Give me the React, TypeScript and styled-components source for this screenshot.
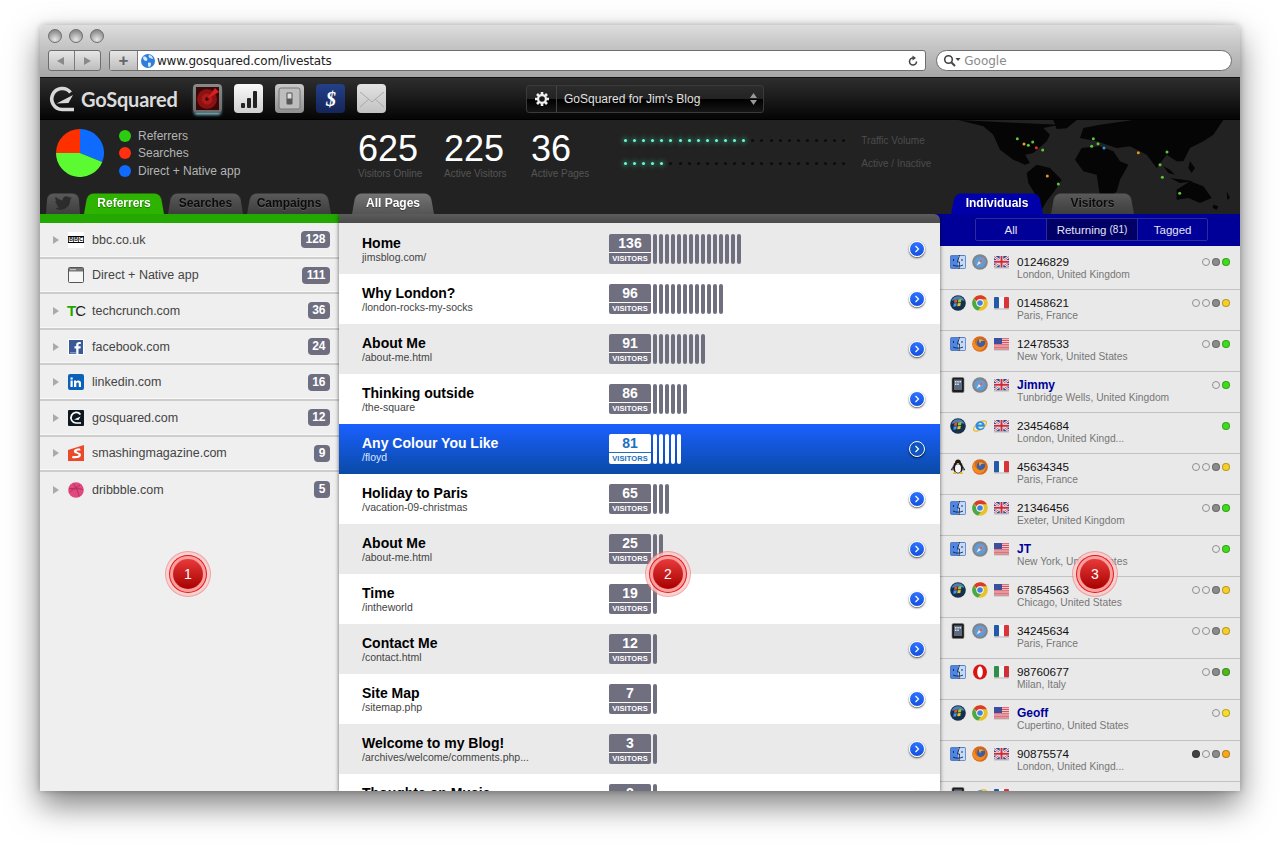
import React from 'react'
import styled, { createGlobalStyle } from 'styled-components'

const GlobalStyle = createGlobalStyle`
  html, body {
    margin: 0;
    padding: 0;
    background: #fff;
    overflow: hidden;
  }
  body {
    font-family: "Liberation Sans", Arial, sans-serif;
  }
`;

/* ---------- data ---------- */

const referrers = [
  { name: 'bbc.co.uk', count: 128, icon: 'bbc' },
  { name: 'Direct + Native app', count: 111, icon: 'direct', noArrow: true },
  { name: 'techcrunch.com', count: 36, icon: 'tc' },
  { name: 'facebook.com', count: 24, icon: 'fb' },
  { name: 'linkedin.com', count: 16, icon: 'in' },
  { name: 'gosquared.com', count: 12, icon: 'gs' },
  { name: 'smashingmagazine.com', count: 9, icon: 'sm' },
  { name: 'dribbble.com', count: 5, icon: 'dr' },
];

const pages = [
  { title: 'Home', path: 'jimsblog.com/', visitors: 136, bars: 15 },
  { title: 'Why London?', path: '/london-rocks-my-socks', visitors: 96, bars: 12 },
  { title: 'About Me', path: '/about-me.html', visitors: 91, bars: 9 },
  { title: 'Thinking outside', path: '/the-square', visitors: 86, bars: 6 },
  { title: 'Any Colour You Like', path: '/floyd', visitors: 81, bars: 5, selected: true },
  { title: 'Holiday to Paris', path: '/vacation-09-christmas', visitors: 65, bars: 3 },
  { title: 'About Me', path: '/about-me.html', visitors: 25, bars: 2 },
  { title: 'Time', path: '/intheworld', visitors: 19, bars: 1 },
  { title: 'Contact Me', path: '/contact.html', visitors: 12, bars: 1 },
  { title: 'Site Map', path: '/sitemap.php', visitors: 7, bars: 1 },
  { title: 'Welcome to my Blog!', path: '/archives/welcome/comments.php...', visitors: 3, bars: 1 },
  { title: 'Thoughts on Music', path: '', visitors: 2, bars: 1 },
];

const G = '#8b8b8b';
const O = 'empty';
const people = [
  { os: 'mac', br: 'safari', fl: 'uk', id: '01246829', place: 'London, United Kingdom', dots: [O, G, '#3fdc1c'] },
  { os: 'win', br: 'chrome', fl: 'fr', id: '01458621', place: 'Paris, France', dots: [O, O, G, '#f7cf2a'] },
  { os: 'mac', br: 'firefox', fl: 'us', id: '12478533', place: 'New York, United States', dots: [O, G, '#3fdc1c'] },
  { os: 'ipad', br: 'safari', fl: 'uk', id: 'Jimmy', named: true, place: 'Tunbridge Wells, United Kingdom', dots: [O, '#3fdc1c'] },
  { os: 'win', br: 'ie', fl: 'uk', id: '23454684', place: 'London, United Kingd...', dots: ['#3fdc1c'] },
  { os: 'tux', br: 'firefox', fl: 'fr', id: '45634345', place: 'Paris, France', dots: [O, O, G, '#f7cf2a'] },
  { os: 'mac', br: 'chrome', fl: 'uk', id: '21346456', place: 'Exeter, United Kingdom', dots: [O, G, '#3fdc1c'] },
  { os: 'mac', br: 'safari', fl: 'us', id: 'JT', named: true, place: 'New York, United States', dots: [O, '#3fdc1c'] },
  { os: 'win', br: 'chrome', fl: 'us', id: '67854563', place: 'Chicago, United States', dots: [O, O, G, '#f7cf2a'] },
  { os: 'ipad', br: 'safari', fl: 'fr', id: '34245634', place: 'Paris, France', dots: [O, O, G, '#f7cf2a'] },
  { os: 'mac', br: 'opera', fl: 'it', id: '98760677', place: 'Milan, Italy', dots: [O, G, '#4fb81f'] },
  { os: 'win', br: 'chrome', fl: 'us', id: 'Geoff', named: true, place: 'Cupertino, United States', dots: [O, '#f7dc2a'] },
  { os: 'mac', br: 'firefox', fl: 'uk', id: '90875574', place: 'London, United Kingd...', dots: ['#444', O, G, '#f7a81e'] },
  { os: 'ipad', br: 'ie', fl: 'fr', id: '', place: '', dots: [] },
];

const mapDots = [
  [202, 62, '#5fc63c'], [248, 72, '#5fc63c'], [235, 82, '#5fc63c'], [278, 96, '#5fc63c'],
  [430, 62, '#5fc63c'], [444, 77, '#5fc63c'], [425, 85, '#5fc63c'], [651, 102, '#5fc63c'],
  [630, 140, '#5fc63c'], [637, 178, '#5fc63c'], [325, 198, '#5fc63c'], [689, 226, '#5fc63c'],
  [222, 78, '#f0a020'], [565, 104, '#f0901c'], [292, 174, '#f0901c'], [259, 89, '#e8302c'], [462, 90, '#1e9cf0'],
];

/* ---------- small drawings ---------- */

const Finder = () => (
  <svg width="16" height="16" viewBox="0 0 16 16">
    <rect x="0.5" y="1.5" width="15" height="13" rx="1" fill="#4f86e4" stroke="#2a55a8" strokeWidth="0.6" />
    <path d="M8 2h7.2v12.200H8z" fill="#c4daf8" />
    <path d="M9.500 1 7.500 8h2l-.5 7" fill="none" stroke="#14233f" strokeWidth="0.9" />
    <path d="M3.500 5v2M12 5v2M3 11c2.500 1.500 7.500 1.500 10 0" stroke="#14233f" strokeWidth="0.9" fill="none" />
  </svg>
);

const WinOrb = () => (
  <svg width="16" height="16" viewBox="0 0 16 16">
    <circle cx="8" cy="8" r="7.800" fill="#14304f" />
    <path d="M1.500 6a6.800 6.800 0 0 1 13 0C10 4 6 4 1.500 6z" fill="#4f7eb0" />
    <path d="M4.500 5 7.500 4.500 7 7.500 4 7.800z" fill="#e8532a" />
    <path d="M8.300 4.400 11.500 4 11 7.200 7.800 7.500z" fill="#8cc83a" />
    <path d="M3.800 8.500 6.800 8.300 6.300 11.300 3.300 11.700z" fill="#3f9be8" />
    <path d="M7.700 8.200 10.800 8 10.300 11 7.200 11.300z" fill="#f2c12e" />
  </svg>
);

const IPad = () => (
  <svg width="16" height="16" viewBox="0 0 16 16">
    <rect x="2" y="0.500" width="12" height="15" rx="1.500" fill="#1c1c1c" stroke="#777" strokeWidth="0.6" />
    <rect x="4" y="2.500" width="8" height="10.500" fill="#5d6b80" />
    <path d="M5 4h1.500v1.500H5zM7.300 4h1.500v1.500H7.300zM9.500 4H11v1.500H9.500zM5 6.500h1.500V8H5zM7.300 6.500h1.500V8H7.300z" fill="#dfe6ef" />
  </svg>
);

const Tux = () => (
  <svg width="16" height="16" viewBox="0 0 16 16">
    <ellipse cx="8" cy="8.500" rx="5" ry="6" fill="#1a1a1a" />
    <path d="M8 0.500c2 0 3 1.500 3 3.500H5c0-2 1-3.500 3-3.500z" fill="#1a1a1a" />
    <ellipse cx="8" cy="9.500" rx="3" ry="4.200" fill="#f4f4f4" />
    <path d="M6.500 4h3L8 5.600z" fill="#f0b41e" />
    <path d="M3 15c0-1.500 1-2 2.500-2l1 2zM13 15c0-1.500-1-2-2.500-2l-1 2z" fill="#f0b41e" />
    <path d="M3 7 .8 11l1.700.4zM13 7l2.200 4-1.700.4z" fill="#1a1a1a" />
  </svg>
);

const Safari = () => (
  <svg width="16" height="16" viewBox="0 0 16 16">
    <circle cx="8" cy="8" r="7.800" fill="#80858c" />
    <circle cx="8" cy="8" r="5.600" fill="#5f9cd8" />
    <path d="M11.500 4.500 9 9 4.500 11.500 7 7z" fill="#e8eef5" />
    <path d="M11.500 4.500 9 9 7 7z" fill="#d9534a" />
  </svg>
);

const Chrome = () => (
  <svg width="16" height="16" viewBox="0 0 16 16">
    <circle cx="8" cy="8" r="7.800" fill="#e8c22c" />
    <path d="M8 .2a7.800 7.800 0 0 1 6.800 4H8a3.800 3.800 0 0 0-3.400 2.100L1.900 3.200A7.800 7.800 0 0 1 8 .2z" fill="#dc3a2e" />
    <path d="M1.900 3.200 5.300 9.600a3.800 3.800 0 0 0 3.700 2.100L6 15.600A7.800 7.800 0 0 1 1.900 3.200z" fill="#4aa84a" />
    <circle cx="8" cy="8" r="3.700" fill="#fff" />
    <circle cx="8" cy="8" r="2.800" fill="#3f7fe0" />
  </svg>
);

const Firefox = () => (
  <svg width="16" height="16" viewBox="0 0 16 16">
    <circle cx="8" cy="8" r="7.800" fill="#d9681a" />
    <circle cx="9" cy="7" r="4.200" fill="#3a5fa8" />
    <path d="M3 3c-.5 3 0 5 2 7 2 1.500 4.500 1.500 6.500 0 1.200-1 2-2.500 2-4 .8 3-.5 7-5 8.500C4 15 .7 11.500.7 8c0-2 1-3.700 2.300-5z" fill="#f28a1e" />
    <path d="M7 3.500c2-.8 4-.2 5.500 1.500-1.500-.5-2.500-.3-3.500.2-.5.8-.2 1.500-.8 2-.7-.5-1.500-2-1.200-3.700z" fill="#f6a82c" />
  </svg>
);

const IE = () => (
  <svg width="16" height="16" viewBox="0 0 16 16">
    <ellipse cx="8" cy="8" rx="7.500" ry="3.500" transform="rotate(-35 8 8)" fill="none" stroke="#e8b82a" strokeWidth="1.200" />
    <path d="M3.500 8a4.700 4.700 0 1 1 9.300.8H6.200c.2 2 3.400 2.700 5.500.8h1c-1.300 3.600-9.200 3.600-9.200-1.600zm2.800-1.600h3.900c-.3-2-3.500-2-3.900 0z" fill="#2d8fe0" />
  </svg>
);

const Opera = () => (
  <svg width="16" height="16" viewBox="0 0 16 16">
    <ellipse cx="8" cy="8" rx="7" ry="7.600" fill="#d81414" />
    <ellipse cx="8" cy="8" rx="2.800" ry="5.800" fill="#fff" />
  </svg>
);

const UK = () => (
  <svg width="16" height="14" viewBox="0 0 16 14">
    <rect y="1" width="15" height="11.500" rx="1" fill="#2b4a96" />
    <path d="M0 1.500 15 12M15 1.500 0 12" stroke="#f2f2f2" strokeWidth="2.400" />
    <path d="M0 1.500 15 12M15 1.500 0 12" stroke="#cf3a46" strokeWidth="0.800" />
    <path d="M7.500 1v11.500M0 6.750h15" stroke="#f2f2f2" strokeWidth="3.600" />
    <path d="M7.500 1v11.500M0 6.750h15" stroke="#cf2a38" strokeWidth="2" />
    <rect y="12.500" width="15" height="1" fill="#bbb" />
  </svg>
);

const US = () => (
  <svg width="16" height="14" viewBox="0 0 16 14">
    <rect y="1" width="15" height="11.500" rx="1" fill="#f4f4f4" />
    <path d="M0 1.800h15M0 3.600h15M0 5.400h15M0 7.200h15M0 9h15M0 10.800h15M0 12.200h15" stroke="#cf2a38" strokeWidth="0.900" />
    <rect y="1" width="8" height="6" fill="#3d4f9c" />
    <rect y="12.500" width="15" height="1" fill="#bbb" />
  </svg>
);

const FR = () => (
  <svg width="16" height="14" viewBox="0 0 16 14">
    <rect y="1" width="5" height="11.500" rx="1" fill="#2458a8" />
    <rect x="5" y="1" width="5" height="11.500" fill="#f4f4f4" />
    <rect x="10" y="1" width="5" height="11.500" rx="1" fill="#d8353a" />
    <rect y="12.500" width="15" height="1" fill="#bbb" />
  </svg>
);

const IT = () => (
  <svg width="16" height="14" viewBox="0 0 16 14">
    <rect y="1" width="5" height="11.500" rx="1" fill="#2f8f4a" />
    <rect x="5" y="1" width="5" height="11.500" fill="#f4f4f4" />
    <rect x="10" y="1" width="5" height="11.500" rx="1" fill="#cf3038" />
    <rect y="12.500" width="15" height="1" fill="#bbb" />
  </svg>
);

const osIcons: Record<string, React.ReactNode> = { mac: <Finder />, win: <WinOrb />, ipad: <IPad />, tux: <Tux /> };
const browserIcons: Record<string, React.ReactNode> = { safari: <Safari />, chrome: <Chrome />, firefox: <Firefox />, ie: <IE />, opera: <Opera /> };
const flagIcons: Record<string, React.ReactNode> = { uk: <UK />, us: <US />, fr: <FR />, it: <IT /> };

const favicons: Record<string, React.ReactNode> = {
  bbc: (
    <svg width="16" height="16" viewBox="0 0 16 16">
      <rect width="16" height="16" fill="#fff" />
      <rect y="4" width="16" height="7" fill="#000" />
      <rect x="0.800" y="5" width="4.400" height="5" fill="#fff" />
      <rect x="5.800" y="5" width="4.400" height="5" fill="#fff" />
      <rect x="10.800" y="5" width="4.400" height="5" fill="#fff" />
      <g fontFamily="Liberation Sans, sans-serif" fontWeight="bold" fontSize="5" textAnchor="middle" fill="#000">
        <text x="3" y="9.400">B</text>
        <text x="8" y="9.400">B</text>
        <text x="13" y="9.400">C</text>
      </g>
    </svg>
  ),
  direct: (
    <svg width="16" height="16" viewBox="0 0 16 16">
      <rect x="0.500" y="0.500" width="15" height="15" rx="1" fill="#f6f6f6" stroke="#555" />
      <rect x="1" y="1" width="14" height="3.500" fill="#777" />
      <path d="M2 2.600h6" stroke="#ccc" />
    </svg>
  ),
  fb: (
    <svg width="16" height="16" viewBox="0 0 16 16">
      <rect x="0.500" y="0.500" width="15" height="15" fill="#3b5998" stroke="#fff" />
      <path d="M10.500 15V9.500h2l.3-2.200h-2.300V6c0-.7.300-1 1-1h1.300V3c-2.800-.4-4.600.4-4.600 2.700v1.600H6.500v2.200h1.700V15z" fill="#fff" />
      <rect x="2" y="13" width="6" height="1.500" fill="#7d93c0" />
    </svg>
  ),
  in: (
    <svg width="16" height="16" viewBox="0 0 16 16">
      <rect width="16" height="16" rx="2" fill="#0a62b8" />
      <path d="M2.500 6.500h2.200V13H2.500zM2.500 3.500h2.200v2H2.500zM6 6.500h2.100v1c1.200-1.700 4.900-1.600 4.900 1.500V13h-2.200V9.600c0-1.600-2.500-1.500-2.500 0V13H6z" fill="#fff" />
    </svg>
  ),
  gs: (
    <svg width="16" height="16" viewBox="0 0 16 16">
      <rect width="16" height="16" rx="1" fill="#10181f" />
      <path d="M12.500 4.500A5.300 5.300 0 1 0 8 13h5" fill="none" stroke="#fff" strokeWidth="1.700" />
      <path d="M6 9.500 12.500 6.500 10.500 10z" fill="#fff" />
    </svg>
  ),
  sm: (
    <svg width="16" height="16" viewBox="0 0 16 16">
      <path d="M0 5 16 0v16H0z" fill="#ea4a2a" />
      <path d="M12 3.500C8 3.200 5.500 4.500 6 6.800c.4 2 4.400 1.700 4.600 3.200.1 1-2 1.300-6 1l-.6 2c4.500.5 8.700.2 9-2.900.2-2.700-4.300-2.700-4.500-3.900-.1-.7 1.500-.9 4-.7z" fill="#fff" />
    </svg>
  ),
  dr: (
    <svg width="16" height="16" viewBox="0 0 16 16">
      <circle cx="8" cy="8" r="7.800" fill="#e0487e" />
      <path d="M5.200 1.500c2.500 3 5 8 6 13M1 6.500c4 .5 8.500-.500 11-3.500M1.300 10.500c3-4 8.500-4.500 13.400-3" fill="none" stroke="#a82a5a" strokeWidth="0.800" />
    </svg>
  ),
};

/* ---------- window + browser chrome ---------- */

const Page = styled.div`
  width: 1280px;
  height: 846px;
  padding: 25px 40px 0;
  box-sizing: border-box;
`;

const Window = styled.div`
  width: 1200px;
  height: 766px;
  display: flex;
  flex-direction: column;
  overflow: hidden;
  border-radius: 5px 5px 0 0;
  box-shadow: 0 14px 32px rgba(0, 0, 0, 0.5), 0 0 6px rgba(0, 0, 0, 0.25);
`;

const BrowserBar = styled.div`
  height: 53px;
  flex: none;
  box-sizing: border-box;
  padding: 4px 8px 0;
  background: linear-gradient(#dedede, #cbcbcb 30%, #a6a6a6);
  border-bottom: 1px solid #111;
`;

const Lights = styled.div`
  display: flex;
  gap: 7px;
`;

const Light = styled.span`
  width: 14px;
  height: 14px;
  border-radius: 50%;
  box-sizing: border-box;
  border: 1px solid #6f6f6f;
  background: radial-gradient(circle at 50% 80%, #e8e8e8, #8f8f8f 75%);
`;

const BrowserTools = styled.div`
  display: flex;
  align-items: center;
  margin-top: 7px;
  height: 21px;
`;

const NavPair = styled.div`
  display: flex;
  width: 53px;
  height: 21px;
  box-sizing: border-box;
  border: 1px solid #6d6d6d;
  border-radius: 3px;
  background: linear-gradient(#e6e6e6, #bdbdbd);
  margin-right: 8px;
`;

const NavCell = styled.span`
  flex: 1;
  display: flex;
  align-items: center;
  justify-content: center;
  & + & {
    border-left: 1px solid #7a7a7a;
  }
`;

const UrlField = styled.div`
  display: flex;
  align-items: center;
  width: 818px;
  height: 21px;
  box-sizing: border-box;
  border: 1px solid #6d6d6d;
  border-radius: 3px;
  background: #fff;
  margin-right: 10px;
  overflow: hidden;
`;

const PlusCell = styled.span`
  width: 27px;
  height: 100%;
  flex: none;
  display: flex;
  align-items: center;
  justify-content: center;
  background: linear-gradient(#e6e6e6, #bdbdbd);
  border-right: 1px solid #7a7a7a;
  color: #666;
  font-size: 17px;
  font-weight: bold;
  line-height: 1;
`;

const UrlText = styled.span`
  flex: 1;
  margin-left: 1px;
  font-family: "DejaVu Sans", sans-serif;
  font-size: 12px;
  letter-spacing: -0.18px;
  color: #222;
`;

const SearchField = styled.div`
  display: flex;
  align-items: center;
  width: 296px;
  height: 21px;
  box-sizing: border-box;
  padding-left: 6px;
  border: 1px solid #6d6d6d;
  border-radius: 11px;
  background: #fff;
  font-family: "DejaVu Sans", sans-serif;
  font-size: 12px;
  color: #8a8a8a;
  gap: 3px;
`;

/* ---------- dark app header ---------- */

const AppHeader = styled.div`
  height: 42px;
  flex: none;
  display: flex;
  align-items: center;
  box-sizing: border-box;
  padding-left: 9px;
  background: linear-gradient(#2e2e2e, #1c1c1c 45%, #050505);
  border-bottom: 1px solid #000;
`;

const LogoText = styled.span`
  margin-left: 6px;
  font-family: "Lato", sans-serif;
  font-weight: 700;
  font-size: 20px;
  letter-spacing: -0.2px;
  color: #dcdcdc;
  width: 112px;
`;

const AppIcons = styled.div`
  display: flex;
  gap: 12px;
  width: 333px;
`;

const AppIcon = styled.span<{ $bg: string; $active?: boolean }>`
  position: relative;
  width: 29px;
  height: 29px;
  display: flex;
  align-items: center;
  justify-content: center;
  border-radius: 4px;
  background: ${p => p.$bg};
  ${p => p.$active && 'box-shadow: 0 3px 3px -1px #6fb5c4;'}
`;

const SiteSelect = styled.div`
  display: flex;
  align-items: center;
  width: 238px;
  height: 28px;
  box-sizing: border-box;
  border: 1px solid #3a3a3a;
  border-radius: 3px;
  background: linear-gradient(#2c2c2c, #232323 48%, #000 52%, #161616);
  color: #e0e0e0;
  font-size: 12px;
`;

const GearCell = styled.span`
  width: 29px;
  height: 100%;
  display: flex;
  align-items: center;
  justify-content: center;
  border-right: 1px solid #444;
`;

const SiteName = styled.span`
  flex: 1;
  padding-left: 7px;
`;

const UpDown = styled.span`
  display: flex;
  flex-direction: column;
  gap: 2px;
  margin-right: 6px;
`;

/* ---------- stats panel ---------- */

const StatsPanel = styled.div`
  position: relative;
  height: 94px;
  flex: none;
  display: flex;
  flex-direction: column;
  background: #222;
`;

const WorldMap = styled.svg`
  position: absolute;
  top: 0;
  right: 0;
`;

const StatsTop = styled.div`
  height: 71px;
  flex: none;
  display: flex;
  position: relative;
`;

const PieSlot = styled.div`
  width: 79px;
  padding: 9px 0 0 16px;
  box-sizing: border-box;
`;

const Legend = styled.div`
  width: 239px;
  padding-top: 7px;
  box-sizing: border-box;
`;

const LegendRow = styled.div`
  display: flex;
  align-items: center;
  height: 17.5px;
  gap: 7px;
  font-size: 12px;
  color: #b4b4b4;
`;

const LegendDot = styled.span<{ $color: string }>`
  width: 12px;
  height: 12px;
  border-radius: 50%;
  background: ${p => p.$color};
`;

const Numbers = styled.div`
  display: flex;
  width: 266px;
  padding-top: 10px;
  box-sizing: border-box;
`;

const NumberBlock = styled.div<{ $width: number }>`
  width: ${p => p.$width}px;
`;

const BigNumber = styled.div`
  font-size: 36px;
  line-height: 38px;
  color: #fff;
`;

const SmallLabel = styled.div`
  font-size: 10px;
  color: #555;
  white-space: nowrap;
  line-height: 11px;
`;

const Meters = styled.div`
  padding-top: 16px;
  box-sizing: border-box;
  display: flex;
  flex-direction: column;
  gap: 14px;
`;

const MeterRow = styled.div`
  display: flex;
  align-items: center;
  height: 9px;
`;

const MeterDot = styled.span<{ $on: boolean }>`
  width: 3px;
  height: 3px;
  margin-right: 6.1px;
  border-radius: 50%;
  background: ${p => (p.$on ? '#6ff5e4' : '#0c0c0c')};
  box-shadow: ${p => (p.$on ? '0 0 4px 2px rgba(60, 220, 150, 0.28)' : 'none')};
`;

const MeterLabel = styled.span`
  margin-left: 10px;
  font-size: 10px;
  color: #4c4c4c;
`;

const TabBar = styled.div`
  height: 23px;
  flex: none;
  display: grid;
  grid-template-columns: 299px 601px 300px;
  position: relative;
`;

const TabGroup = styled.div<{ $pad: number; $gap: number }>`
  display: flex;
  padding-left: ${p => p.$pad}px;
  gap: ${p => p.$gap}px;
`;

const Tab = styled.div<{ $width: number; $bg: string; $active?: boolean }>`
  position: relative;
  width: ${p => p.$width}px;
  height: 23px;
  display: flex;
  align-items: center;
  justify-content: center;
  font-size: 12px;
  font-weight: bold;
  box-sizing: border-box;
  color: ${p => (p.$active ? '#fff' : '#0c0c0c')};
  text-shadow: ${p => (p.$active ? '0 1px 1px rgba(0,0,0,.4)' : '0 1px 0 rgba(255,255,255,.12)')};
  &::before {
    content: '';
    position: absolute;
    inset: 0;
    z-index: 0;
    background: ${p => p.$bg};
    border-radius: 7px 7px 0 0;
    transform: perspective(40px) rotateX(10deg);
    transform-origin: bottom;
  }
  span, svg {
    position: relative;
    z-index: 1;
  }
`;

/* ---------- three columns ---------- */

const Columns = styled.div`
  flex: 1;
  min-height: 0;
  display: grid;
  grid-template-columns: 299px 601px 300px;
  background: #eee;
`;

const Column = styled.div<{ $bg: string }>`
  position: relative;
  overflow: hidden;
  background: ${p => p.$bg};
`;

const CenterColumn = styled(Column)`
  overflow: visible;
  z-index: 1;
  box-shadow: 0 0 4px rgba(0, 0, 0, 0.6);
  clip-path: inset(0 -6px 0 -6px);
`;

const GreenStrip = styled.div`
  height: 9px;
  background: #22a800;
`;

const RefRow = styled.div`
  height: 35.6px;
  display: flex;
  align-items: center;
  box-sizing: border-box;
  padding: 0 9px 0 13px;
  border-bottom: 2px solid #cdcdcd;
  box-shadow: inset 0 -1px 0 #f8f8f8;
  font-size: 12.5px;
  color: #444;
  &:last-child {
    border-bottom: none;
    box-shadow: none;
  }
`;

const RowArrow = styled.span<{ $hidden?: boolean }>`
  width: 0;
  height: 0;
  border-left: 6px solid #aaa;
  border-top: 4.5px solid transparent;
  border-bottom: 4.5px solid transparent;
  margin-right: 9px;
  visibility: ${p => (p.$hidden ? 'hidden' : 'visible')};
`;

const Favicon = styled.span`
  width: 16px;
  height: 16px;
  display: flex;
  align-items: center;
  justify-content: center;
  margin-right: 8px;
  flex: none;
`;

const TcIcon = styled.span`
  font-size: 15px;
  letter-spacing: -1px;
  color: #222;
  b {
    color: #1ea800;
  }
`;

const RefName = styled.span`
  flex: 1;
`;

const CountBadge = styled.span`
  min-width: 7px;
  padding: 0 4.5px;
  height: 17px;
  line-height: 17px;
  text-align: center;
  border-radius: 4px;
  background: #6e6e80;
  color: #fff;
  font-size: 12px;
  font-weight: bold;
`;

const GreyStrip = styled.div`
  height: 9px;
  background: linear-gradient(#5c5c5c, #4a4a4a);
  border-radius: 0 6px 0 0;
`;

const PageList = styled.div`
  height: 569px;
  overflow: hidden;
  background: #fff;
`;

const PageRow = styled.div<{ $alt: boolean; $selected?: boolean }>`
  height: 50px;
  display: flex;
  align-items: center;
  box-sizing: border-box;
  padding: 0 15px 0 23px;
  background: ${p => (p.$selected
    ? 'linear-gradient(#1a60ff, #0a4aa6)'
    : p.$alt ? '#eaeaea' : '#fff')};
  &:first-child {
    height: 51px;
  }
`;

const PageText = styled.div<{ $selected?: boolean }>`
  width: 247px;
  flex: none;
  color: ${p => (p.$selected ? '#fff' : '#000')};
`;

const PageTitle = styled.div`
  font-size: 14px;
  font-weight: bold;
  line-height: 16px;
`;

const PagePath = styled.div<{ $selected?: boolean }>`
  min-height: 12px;
  font-size: 10.5px;
  line-height: 12px;
  color: ${p => (p.$selected ? '#dbe6ff' : '#444')};
`;

const VisitorBox = styled.div<{ $selected?: boolean }>`
  width: 42px;
  height: 30px;
  flex: none;
  display: flex;
  flex-direction: column;
  border-radius: 2px;
  overflow: hidden;
  background: ${p => (p.$selected ? '#fff' : '#6f6f80')};
  color: ${p => (p.$selected ? '#2070c0' : '#fff')};
`;

const VisitorCount = styled.div<{ $selected?: boolean }>`
  height: 18px;
  line-height: 19px;
  text-align: center;
  font-size: 14px;
  font-weight: bold;
  border-bottom: 1px solid ${p => (p.$selected ? '#2070c0' : '#fff')};
`;

const VisitorLabel = styled.div`
  height: 11px;
  line-height: 11px;
  text-align: center;
  font-size: 7.5px;
  font-weight: bold;
  letter-spacing: 0.1px;
`;

const Bars = styled.div`
  display: flex;
  gap: 2px;
  margin-left: 2px;
  flex: 1;
  height: 30px;
`;

const Bar = styled.span<{ $selected?: boolean }>`
  width: 4px;
  height: 30px;
  border-radius: 2px;
  background: ${p => (p.$selected ? '#fff' : '#6f6f80')};
`;

const GoButton = styled.span<{ $selected?: boolean }>`
  width: 16px;
  height: 16px;
  flex: none;
  display: flex;
  align-items: center;
  justify-content: center;
  border-radius: 50%;
  box-sizing: border-box;
  border: 1px solid #fff;
  background: ${p => (p.$selected ? '#0f55c0' : 'linear-gradient(#2e74ff, #1450e0)')};
  box-shadow: 0 1px 2px rgba(0, 0, 0, 0.7);
`;

const BlueStrip = styled.div`
  height: 32px;
  box-sizing: border-box;
  padding: 4px 0 0 35px;
  background: #000099;
`;

const Segments = styled.div`
  display: flex;
  width: 233px;
  height: 23px;
  box-sizing: border-box;
  border: 1px solid #2c2c9a;
  border-radius: 2px;
  color: #e4e4f4;
  font-size: 11.5px;
`;

const Segment = styled.span<{ $width: number; $active?: boolean }>`
  width: ${p => p.$width}px;
  display: flex;
  align-items: center;
  justify-content: center;
  background: ${p => (p.$active ? '#000066' : 'transparent')};
  border-right: 1px solid #2c2c9a;
  &:last-child {
    border-right: none;
  }
  small {
    font-size: 10px;
    margin-left: 3px;
  }
`;

const PersonRow = styled.div`
  height: 41px;
  display: flex;
  box-sizing: border-box;
  padding: 5px 10px 0 10px;
  background: #e9e9e9;
  border-bottom: 1px solid #c2c2c2;
  &:first-child {
    height: 44px;
    padding-top: 8px;
  }
`;

const PersonIcon = styled.span`
  width: 16px;
  height: 16px;
  flex: none;
  margin-right: 6px;
  display: flex;
  align-items: center;
`;

const PersonText = styled.div`
  margin-left: -2px;
  margin-top: 1px;
  padding-left: 3px;
  flex: 1;
  white-space: nowrap;
`;

const PersonId = styled.div<{ $named?: boolean }>`
  font-size: ${p => (p.$named ? '12px' : '11.7px')};
  font-weight: ${p => (p.$named ? 'bold' : 'normal')};
  line-height: 14px;
  color: ${p => (p.$named ? '#000099' : '#111')};
`;

const PersonPlace = styled.div`
  font-size: 10.25px;
  line-height: 12px;
  color: #777;
`;

const StatusDots = styled.div`
  display: flex;
  gap: 2px;
  padding-top: 4px;
`;

const StatusDot = styled.span<{ $color: string }>`
  width: 8px;
  height: 8px;
  border-radius: 50%;
  box-sizing: border-box;
  background: ${p => (p.$color === 'empty' ? 'transparent' : p.$color)};
  border: 1px solid ${p => (p.$color === 'empty' ? '#8f8f8f' : 'rgba(0,0,0,.25)')};
`;

const Marker = styled.div<{ $left: number }>`
  position: absolute;
  left: ${p => p.$left}px;
  top: 345px;
  width: 30px;
  height: 30px;
  display: flex;
  align-items: center;
  justify-content: center;
  z-index: 3;
  border-radius: 50%;
  background: linear-gradient(#e83a3a, #a80000);
  color: #fff;
  font-size: 14px;
  box-shadow: 0 0 0 3px rgba(255,255,255,.6), 0 0 0 4px #ee1111, 0 0 0 7px rgba(255,255,255,.5), 0 0 0 8px rgba(240, 110, 110, 0.6);
`;

/* ---------- page ---------- */

export default function App() {
  return (
    <Page>
      <GlobalStyle />
      <Window>
        <BrowserBar>
          <Lights>
            <Light /><Light /><Light />
          </Lights>
          <BrowserTools>
            <NavPair>
              <NavCell>
                <svg width="10" height="10" viewBox="0 0 10 10"><path d="M8 1v8L1 5z" fill="#8a8a8a" /></svg>
              </NavCell>
              <NavCell>
                <svg width="10" height="10" viewBox="0 0 10 10"><path d="M2 1v8l7-4z" fill="#8a8a8a" /></svg>
              </NavCell>
            </NavPair>
            <UrlField>
              <PlusCell>+</PlusCell>
              <svg width="16" height="16" viewBox="0 0 16 16" style={{ marginLeft: 2, flex: 'none' }}>
                <circle cx="8" cy="8" r="7" fill="#2f7fd8" />
                <path d="M3 4c2-1 3 0 4 1s0 3-1 3-3-1-3-4zM9 2c2 0 4 2 4 4-2 0-2-1-3-1s-2-2-1-3zM8 10c2-1 3 0 3 1s-1 3-2 3-1-2-1-4z" fill="#d8e8f8" />
              </svg>
              <UrlText>www.gosquared.com/livestats</UrlText>
              <svg width="12" height="12" viewBox="0 0 12 12" style={{ marginRight: 6 }}>
                <path d="M9.500 6.500A3.500 3.500 0 1 1 6 3" fill="none" stroke="#444" strokeWidth="1.600" />
                <path d="M5.500 0.500 9 3 5.500 5.500z" fill="#444" />
              </svg>
            </UrlField>
            <SearchField>
              <svg width="18" height="13" viewBox="0 0 18 13">
                <circle cx="5.500" cy="5.500" r="3.800" fill="none" stroke="#444" strokeWidth="1.600" />
                <path d="M8.500 8.500 12 12" stroke="#444" strokeWidth="2" />
                <path d="M12.500 4h5l-2.500 3z" fill="#444" />
              </svg>
              Google
            </SearchField>
          </BrowserTools>
        </BrowserBar>

        <AppHeader>
          <svg width="26" height="26" viewBox="0 0 26 26">
            <path d="M21.500 6.500A10.500 10.500 0 1 0 13 23.500H25" fill="none" stroke="#d8d8d8" strokeWidth="3.600" />
            <path d="M7.500 17.500 24 9 19.500 17z" fill="#d8d8d8" />
          </svg>
          <LogoText>GoSquared</LogoText>
          <AppIcons>
            <AppIcon $bg="linear-gradient(#8a8a8a, #6a6a6a)" $active>
              <svg width="23" height="23" viewBox="0 0 23 23">
                <rect width="23" height="23" fill="#3a0808" />
                <circle cx="11" cy="12" r="10" fill="#8a1212" />
                <circle cx="11" cy="12" r="5.500" fill="#b01a1a" />
                <circle cx="11" cy="12" r="1.800" fill="#3a0808" />
                <path d="M11 12 19 1l4 4z" fill="#d82020" />
              </svg>
            </AppIcon>
            <AppIcon $bg="linear-gradient(#fafafa, #cfcfcf)">
              <svg width="20" height="20" viewBox="0 0 20 20">
                <rect x="2" y="14" width="4" height="5" rx="1" fill="#222" />
                <rect x="8" y="9" width="4" height="10" rx="1" fill="#222" />
                <rect x="14" y="2" width="4" height="17" rx="1" fill="#222" />
              </svg>
            </AppIcon>
            <AppIcon $bg="linear-gradient(#c8c8c8, #8f8f8f)">
              <svg width="23" height="23" viewBox="0 0 23 23">
                <rect x="1" y="1" width="21" height="21" rx="2" fill="#bdbdbd" stroke="#777" />
                <rect x="8.500" y="5.500" width="6" height="12" rx="1" fill="#555" />
                <rect x="9.500" y="6.500" width="4" height="5" fill="#ddd" />
              </svg>
            </AppIcon>
            <AppIcon $bg="linear-gradient(#24408a, #142558)">
              <svg width="20" height="24" viewBox="0 0 20 24">
                <text x="10" y="19" textAnchor="middle" fontFamily="Liberation Serif, serif" fontWeight="bold" fontStyle="italic" fontSize="20" fill="#fff">$</text>
              </svg>
            </AppIcon>
            <AppIcon $bg="linear-gradient(#e2e2e2, #c2c2c2)">
              <svg width="26" height="20" viewBox="0 0 26 20">
                <path d="M1 3l12 10L25 3M1 18l9-8M25 18l-9-8" fill="none" stroke="#aaa" />
              </svg>
            </AppIcon>
          </AppIcons>
          <SiteSelect>
            <GearCell>
              <svg width="16" height="16" viewBox="0 0 16 16">
                <path d="M8 1v14M1 8h14M3 3l10 10M13 3 3 13" stroke="#eee" strokeWidth="2.600" />
                <circle cx="8" cy="8" r="5" fill="#eee" />
                <circle cx="8" cy="8" r="2.800" fill="#1c1c1c" />
              </svg>
            </GearCell>
            <SiteName>GoSquared for Jim's Blog</SiteName>
            <UpDown>
              <svg width="7" height="5" viewBox="0 0 7 5"><path d="M3.500 0 7 5H0z" fill="#999" /></svg>
              <svg width="7" height="5" viewBox="0 0 7 5"><path d="M0 0h7L3.500 5z" fill="#999" /></svg>
            </UpDown>
          </SiteSelect>
        </AppHeader>

        <StatsPanel>
          <WorldMap width="290" height="94" viewBox="0 6 870 282">
            <g fill="#050505">
              <path d="M25 6 100 25l30 25 20 45 40 30 35 15 15-5-15-25 25-5 40-35 10-20-20-20 50-10-120-5z" />
              <path d="M310 6h70l-30 25-30 2z" />
              <path d="M230 165l30-25 40 10 35 35-15 25-30 40-20 35-8-45-27-45z" />
              <path d="M375 125l20-35 55-5 40 15 20 30 25 10-25 45-10 35-30 30-20-15-10-65-40-10z" />
              <path d="M390 60l10-30 50-10 100-14h270l-30 44-30 20-40 20-20 40-20 0-30-20-30 40-30-40-50-25-40 5-60-20z" />
              <path d="M680 215l40-25 40 15 25 35-35 15-35-15-35 5z" />
              <path d="M640 145l20 10 15 15-20-5zM660 180l40 5 30 5-40 5zM720 130l15 20-10 15-10-15zM790 260l15 5-5 10-12-5zM830 220l10 20-8 5z" />
            </g>
            {mapDots.map(([x, y, c]) => (
              <circle key={`${x}-${y}`} cx={x as number} cy={y as number} r="4.5" fill={c as string} />
            ))}
          </WorldMap>
          <StatsTop>
            <PieSlot>
              <svg width="48" height="48" viewBox="0 0 48 48">
                <path d="M24 24V0a24 24 0 0 1 22.250 33z" fill="#0f6bff" />
                <path d="M24 24 46.250 33A24 24 0 0 1 0 24z" fill="#5cfa30" />
                <path d="M24 24H0A24 24 0 0 1 24 0z" fill="#ff3000" />
              </svg>
            </PieSlot>
            <Legend>
              <LegendRow><LegendDot $color="#2ecc10" />Referrers</LegendRow>
              <LegendRow><LegendDot $color="#ff3010" />Searches</LegendRow>
              <LegendRow><LegendDot $color="#0f6bff" />Direct + Native app</LegendRow>
            </Legend>
            <Numbers>
              <NumberBlock $width={86}><BigNumber>625</BigNumber><SmallLabel>Visitors Online</SmallLabel></NumberBlock>
              <NumberBlock $width={87}><BigNumber>225</BigNumber><SmallLabel>Active Visitors</SmallLabel></NumberBlock>
              <NumberBlock $width={93}><BigNumber>36</BigNumber><SmallLabel>Active Pages</SmallLabel></NumberBlock>
            </Numbers>
            <Meters>
              <MeterRow>
                {Array.from({ length: 25 }, (_, i) => <MeterDot key={i} $on={i < 14} />)}
                <MeterLabel>Traffic Volume</MeterLabel>
              </MeterRow>
              <MeterRow>
                {Array.from({ length: 25 }, (_, i) => <MeterDot key={i} $on={i < 5} />)}
                <MeterLabel>Active / Inactive</MeterLabel>
              </MeterRow>
            </Meters>
          </StatsTop>
          <TabBar>
            <TabGroup $pad={6} $gap={4}>
              <Tab $width={34} $bg="linear-gradient(#5a5a5a, #3e3e3e)">
                <svg width="17" height="14" viewBox="0 0 24 20">
                  <path d="M23 2.500c-.9.400-1.800.7-2.800.8 1-.6 1.800-1.600 2.100-2.700-.9.600-2 1-3.100 1.200A4.900 4.900 0 0 0 11 6.300C7 6.100 3.400 4.200 1 1.200c-1.300 2.200-.7 5.100 1.500 6.500-.8 0-1.500-.2-2.200-.6 0 2.400 1.700 4.400 3.900 4.900-.7.200-1.500.2-2.200.1.600 2 2.400 3.400 4.600 3.400A9.800 9.800 0 0 1 0 17.500 13.900 13.900 0 0 0 21.500 5.200c1-.7 1.800-1.600 2.500-2.700z" fill="#2c2c2c" />
                </svg>
              </Tab>
              <Tab $width={80} $bg="#2eb400" $active><span>Referrers</span></Tab>
              <Tab $width={75} $bg="linear-gradient(#5a5a5a, #3e3e3e)"><span>Searches</span></Tab>
              <Tab $width={84} $bg="linear-gradient(#5a5a5a, #3e3e3e)"><span>Campaigns</span></Tab>
            </TabGroup>
            <TabGroup $pad={13} $gap={0}>
              <Tab $width={82} $bg="linear-gradient(#757575, #555)" $active><span>All Pages</span></Tab>
            </TabGroup>
            <TabGroup $pad={11} $gap={8}>
              <Tab $width={92} $bg="#0000aa" $active><span>Individuals</span></Tab>
              <Tab $width={83} $bg="linear-gradient(#5a5a5a, #3e3e3e)"><span>Visitors</span></Tab>
            </TabGroup>
          </TabBar>
        </StatsPanel>

        <Columns>
          <Column $bg="#efefef">
            <GreenStrip />
            <div>
              {referrers.map(r => (
                <RefRow key={r.name}>
                  <RowArrow $hidden={r.noArrow} />
                  <Favicon>
                    {r.icon === 'tc' ? <TcIcon><b>T</b>C</TcIcon> : favicons[r.icon]}
                  </Favicon>
                  <RefName>{r.name}</RefName>
                  <CountBadge>{r.count}</CountBadge>
                </RefRow>
              ))}
            </div>
            <Marker $left={133}>1</Marker>
          </Column>

          <CenterColumn $bg="#000099">
            <GreyStrip />
            <PageList>
              {pages.map((p, i) => (
                <PageRow key={`${p.title}-${i}`} $alt={i % 2 === 0} $selected={p.selected}>
                  <PageText $selected={p.selected}>
                    <PageTitle>{p.title}</PageTitle>
                    <PagePath $selected={p.selected}>{p.path}</PagePath>
                  </PageText>
                  <VisitorBox $selected={p.selected}>
                    <VisitorCount $selected={p.selected}>{p.visitors}</VisitorCount>
                    <VisitorLabel>VISITORS</VisitorLabel>
                  </VisitorBox>
                  <Bars>
                    {Array.from({ length: p.bars }, (_, b) => <Bar key={b} $selected={p.selected} />)}
                  </Bars>
                  <GoButton $selected={p.selected}>
                    <svg width="8" height="8" viewBox="0 0 8 8">
                      <path d="M2.500 1 5.500 4l-3 3" fill="none" stroke="#fff" strokeWidth="1.200" />
                    </svg>
                  </GoButton>
                </PageRow>
              ))}
            </PageList>
            <Marker $left={314}>2</Marker>
          </CenterColumn>

          <Column $bg="#e9e9e9">
            <BlueStrip>
              <Segments>
                <Segment $width={71}>All</Segment>
                <Segment $width={92} $active>Returning<small>(81)</small></Segment>
                <Segment $width={70}>Tagged</Segment>
              </Segments>
            </BlueStrip>
            <div>
              {people.map((v, i) => (
                <PersonRow key={i}>
                  <PersonIcon>{osIcons[v.os]}</PersonIcon>
                  <PersonIcon>{browserIcons[v.br]}</PersonIcon>
                  <PersonIcon>{flagIcons[v.fl]}</PersonIcon>
                  <PersonText>
                    <PersonId $named={v.named}>{v.id}</PersonId>
                    <PersonPlace>{v.place}</PersonPlace>
                  </PersonText>
                  <StatusDots>
                    {v.dots.map((d, n) => <StatusDot key={n} $color={d} />)}
                  </StatusDots>
                </PersonRow>
              ))}
            </div>
            <Marker $left={140}>3</Marker>
          </Column>
        </Columns>
      </Window>
    </Page>
  )
}
